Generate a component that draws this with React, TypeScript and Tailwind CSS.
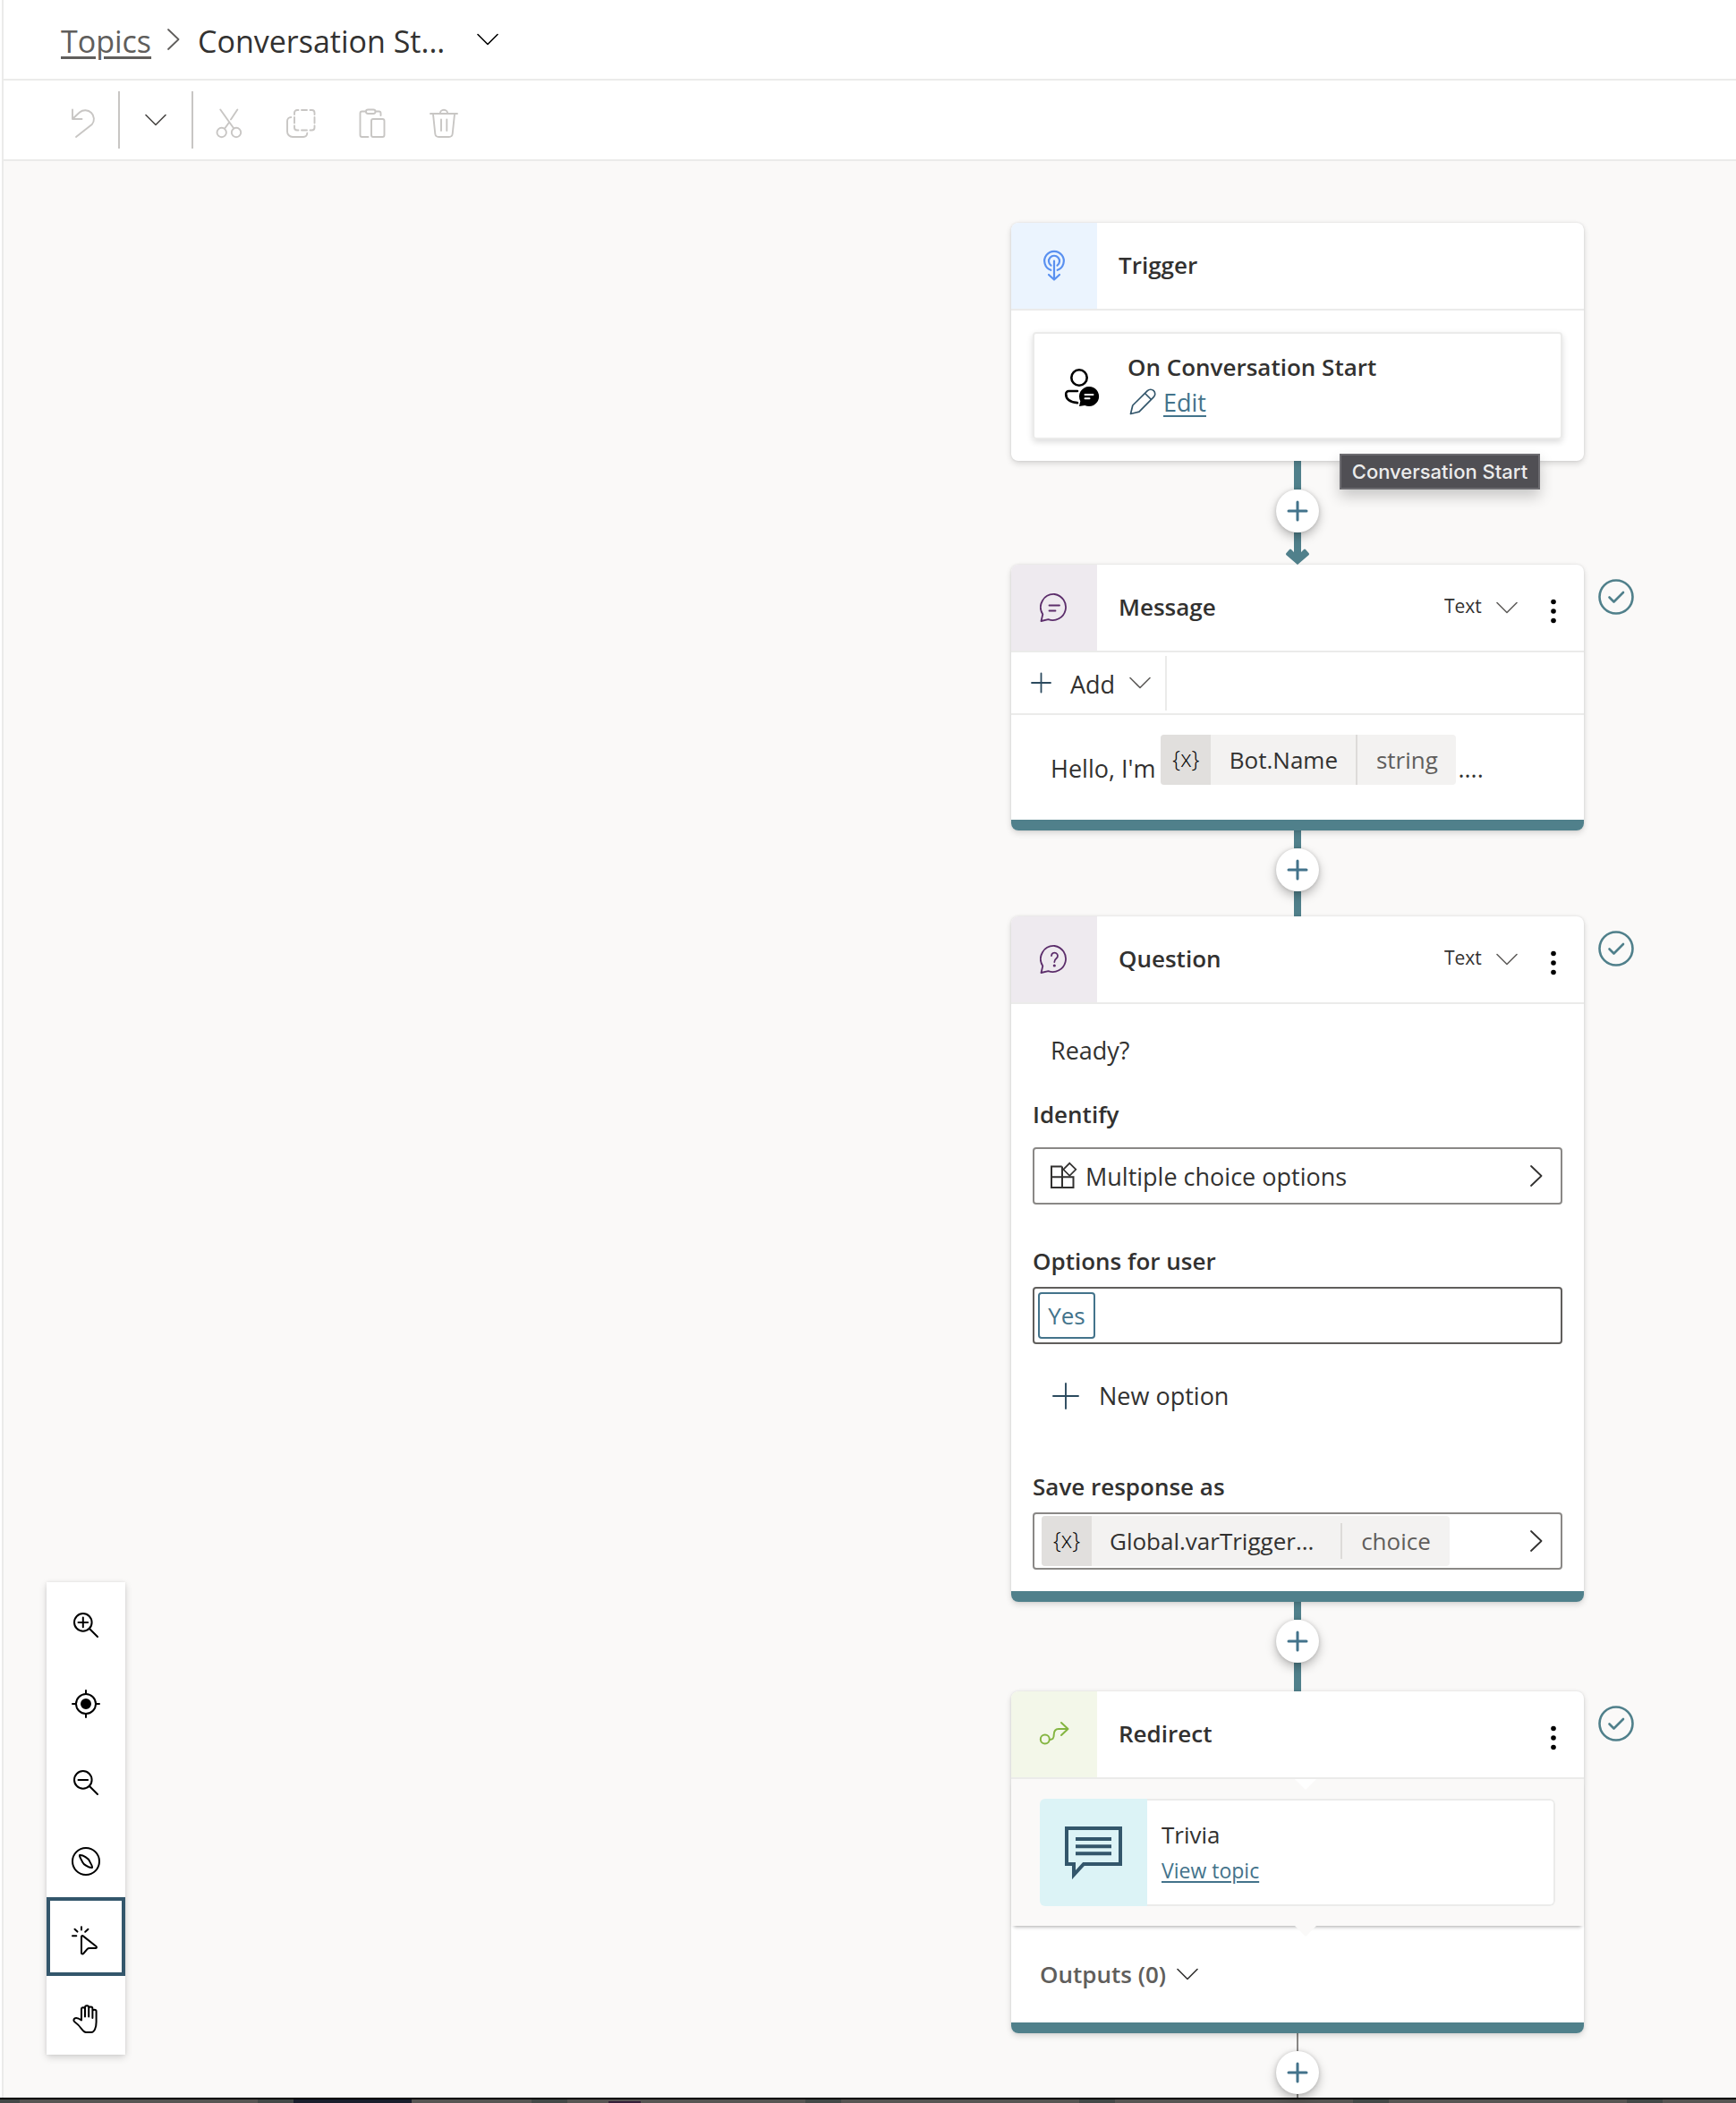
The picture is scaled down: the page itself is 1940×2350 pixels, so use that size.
import type { ReactNode } from "react";

type IconProps = { className?: string };

const line = {
  fill: "none",
  stroke: "currentColor",
  strokeLinecap: "round" as const,
  strokeLinejoin: "round" as const,
  "aria-hidden": true,
};

function ChevronDown({ className = "" }: IconProps) {
  return (
    <svg className={`h-3.5 w-6 shrink-0 ${className}`} viewBox="0 0 24 14" {...line} strokeWidth="1.6">
      <path d="M1 1.5l11 11 11-11" />
    </svg>
  );
}

function ChevronRight({ className = "" }: IconProps) {
  return (
    <svg className={`h-6 w-3.5 shrink-0 ${className}`} viewBox="0 0 14 24" {...line} strokeWidth="1.8">
      <path d="M1 1l11.500 11L1 23" />
    </svg>
  );
}

/* ---------- command bar icons ---------- */

function BarIcon({ children }: { children: ReactNode }) {
  return (
    <svg className="h-10 w-8 overflow-visible" viewBox="0 -6 32 40" {...line} strokeWidth="1.9">
      {children}
    </svg>
  );
}

const UndoIcon = () => (
  <BarIcon>
    <path d="M1 2.500v10.500h10.500M1.500 12.500L9 5.500A9.700 9.700 0 0 1 22.800 19L5 33" />
  </BarIcon>
);
const CutIcon = () => (
  <BarIcon>
    <circle cx="7.700" cy="28" r="5.200" />
    <circle cx="24" cy="28" r="5.200" />
    <path d="M6.300 2.500l15 21M25.300 2.500l-7.300 11M15.500 17.500l-4.300 6" />
  </BarIcon>
);
const CopyIcon = () => (
  <BarIcon>
    <path d="M9 8V6a3 3 0 0 1 3-3h1.500M17 3h6M26.500 3h2a3 3 0 0 1 3 3v2M31.500 11v6.500M31.500 20.500v2a3 3 0 0 1-3 3h-2M23 25.500h-6M13.500 25.500H12a3 3 0 0 1-3-3v-2M9 17.500V11" />
    <path d="M5.300 11A4.300 4.300 0 0 0 1 15.300V27a6 6 0 0 0 6 6h12a4.500 4.500 0 0 0 4.300-4.200" />
  </BarIcon>
);
const PasteIcon = () => (
  <BarIcon>
    <rect x="9" y="2.500" width="10.500" height="4.500" rx="2.200" />
    <path d="M8.500 4.500h-4a2 2 0 0 0-2 2V31a2 2 0 0 0 2 2H11.500M19.800 4.500h3.700a2 2 0 0 1 2 2V9" />
    <rect x="15" y="13" width="14.500" height="20" rx="2" />
  </BarIcon>
);
const TrashIcon = () => (
  <BarIcon>
    <path d="M1 7h30M11.800 7a4.200 4.200 0 0 1 8.400 0M4 7.500l2.300 22a4 4 0 0 0 4 3.500h11.400a4 4 0 0 0 4-3.500l2.300-22M13 13.500v12.500M19.300 13.500v12.500" />
  </BarIcon>
);

/* ---------- canvas tool icons ---------- */

function ToolIcon({ children }: { children: ReactNode }) {
  return (
    <svg className="size-8 overflow-visible" viewBox="0 0 32 32" {...line} strokeWidth="2">
      {children}
    </svg>
  );
}

const tools: { label: string; active?: boolean; icon: ReactNode }[] = [
  {
    label: "Zoom in",
    icon: (
      <>
        <circle cx="12.800" cy="12.900" r="9.800" />
        <path d="M20 20l9 9M7.500 12.900h10.600M12.800 7.600v10.600" />
      </>
    ),
  },
  {
    label: "Center view",
    icon: (
      <>
        <circle cx="16" cy="16" r="11" />
        <circle cx="16" cy="16" r="5" fill="currentColor" />
        <path d="M16 1v4M16 27v4M1 16h4M27 16h4" />
      </>
    ),
  },
  {
    label: "Zoom out",
    icon: (
      <>
        <circle cx="12.800" cy="12.900" r="9.800" />
        <path d="M20 20l9 9M7.500 12.900h10.600" />
      </>
    ),
  },
  {
    label: "Minimap",
    icon: (
      <>
        <circle cx="16" cy="16" r="15" />
        <path d="M9 9c-.8 1.200 2 5 3.200 7.800 1 2.300 6.800 6.700 10.800 6.200.8-1.200-2-5-3.200-7.800C18.800 12.900 13 8.500 9 9z" />
      </>
    ),
  },
  {
    label: "Select mode",
    active: true,
    icon: (
      <path d="M11 1.200v3.300M3.500 3.800l3 2.800M18.500 3.800l-3.300 3M1 11.200h4.300M11 12.200v18c0 1.300 1.300 1.700 2.200.8l4.200-4.800c.7-.8 1.500-1.100 2.500-1.100h6.800c1.300 0 1.700-1.300.8-2.100L12.800 11.400c-.9-.7-1.800-.3-1.800.8z" />
    ),
  },
  {
    label: "Pan mode",
    icon: (
      <path d="M11 17.500V5.200c0-2.600 4-2.600 4 0V13.500M15 5V3.200c0-2.600 4.200-2.600 4.200 0V13.500M19.200 4.500c0-2.600 4.200-2.600 4.200 0V15M23.400 7.500c0-2.400 4.200-2.400 4.200 0V19.500c0 7-2.500 11.500-5.500 11.500h-6c-2 0-3-1-4.500-3.200-2.800-4-4.600-6-8-8.300-1.600-1-1.600-3 0-4.100 2.200-1.400 5 .4 7.400 2.100" />
    ),
  },
];

/* ---------- node icons ---------- */

const TriggerIcon = () => (
  <svg className="h-9 w-8" viewBox="0 0 32 36" {...line} strokeWidth="2.200">
    <path d="M12.300 22.800a10.800 10.800 0 1 1 7.400 0M12.500 17.600a6 6 0 1 1 7 0M16 12.500v20M10 28l6 5.500 6-5.500" />
  </svg>
);
const bubble = "M16.500 1A14.600 14.600 0 1 1 9.500 29.200L1.500 31l1.800-7.500A14.600 14.600 0 0 1 16.500 1z";
const MessageIcon = () => (
  <svg className="size-8" viewBox="0 0 32 32" {...line} strokeWidth="1.800">
    <path d={bubble} />
    <path d="M10.500 13.500h11.500M10.500 19.500h7" />
  </svg>
);
const QuestionIcon = () => (
  <svg className="size-8" viewBox="0 0 32 32" {...line} strokeWidth="1.800">
    <path d={bubble} />
    <path d="M13 12a3.500 3.500 0 1 1 5.700 2.800c-1.500 1.200-2.400 2-2.400 4.200" />
    <circle cx="16.300" cy="23" r="0.700" fill="currentColor" />
  </svg>
);
const RedirectIcon = () => (
  <svg className="size-8 overflow-visible" viewBox="0 0 32 32" {...line} strokeWidth="2">
    <circle cx="5.800" cy="21.500" r="5" />
    <path d="M11 22c3.800 0 4.700-1.600 4.700-5.200 0-4.400 1.500-6.800 5.300-6.800h10M24 3l7.500 7-7.500 7" />
  </svg>
);
const PersonChatIcon = () => (
  <svg className="h-12 w-11 shrink-0 text-black" viewBox="0 0 44 48" {...line} strokeWidth="2.600">
    <circle cx="18" cy="15" r="8.700" />
    <path d="M16 30H6.500A3.200 3.200 0 0 0 3.200 33.200c0 6 5.300 9.300 12.800 9.900" />
    <path d="M29 25a11 11 0 1 1-4.700 20.900L18 47l1.300-5.800A11 11 0 0 1 29 25z" fill="currentColor" stroke="none" />
    <path d="M24.500 34h9M24.500 38.200h5" stroke="white" strokeWidth="2" />
  </svg>
);
const PencilIcon = () => (
  <svg className="size-[30px] shrink-0 text-[#33566b]" viewBox="0 0 30 30" {...line} strokeWidth="1.700">
    <path d="M1.500 28.500L3.800 19 20.300 2.700a4.900 4.900 0 0 1 7 7L11 26.200zM17.500 5.500l7 7" />
  </svg>
);
const OptionsIcon = () => (
  <svg className="size-8 shrink-0" viewBox="0 0 32 32" fill="none" stroke="currentColor" strokeWidth="2" aria-hidden>
    <path d="M13.700 5.500H2V29h24.500V17.200H2M14 5.500V29" />
    <path d="M22.300 1.800l7 7-7 7-7-7z" strokeWidth="1.700" />
  </svg>
);
const TopicIcon = () => (
  <svg className="h-[60px] w-16 text-[#33566b]" viewBox="0 0 64 60" fill="none" stroke="currentColor" strokeWidth="4" aria-hidden>
    <path d="M2 3h60v40H21L10 55V43H2z" />
    <path d="M12 15h40M12 23.300h40M12 31.300h40" />
  </svg>
);

function StatusCheck() {
  return (
    <svg className="absolute top-4 left-full ml-4 size-10 text-[#50808b]" viewBox="0 0 40 40" {...line} role="img" aria-label="No errors">
      <circle cx="20" cy="20" r="18.500" strokeWidth="2.600" />
      <path d="M12.500 20.500l5 5 10.500-10.500" strokeWidth="2.600" />
    </svg>
  );
}

/* ---------- building blocks ---------- */

function Node({ children, bar = true, status = true }: { children: ReactNode; bar?: boolean; status?: boolean }) {
  return (
    <article className="relative w-[640px] rounded-lg bg-white shadow-[0_3px_7px_rgba(0,0,0,0.14),0_0_3px_rgba(0,0,0,0.1)]">
      {children}
      {bar && <div className="h-3 rounded-b-lg bg-[#50808b]" />}
      {status && <StatusCheck />}
    </article>
  );
}

function NodeHeader({ icon, tile, title, kind, menu = true }: { icon: ReactNode; tile: string; title: string; kind?: string; menu?: boolean }) {
  return (
    <header className="flex h-[98px] items-center border-b-2 border-[#ebebea]">
      <div className={`flex h-full w-24 items-center justify-center rounded-tl-lg ${tile}`}>{icon}</div>
      <h2 className="flex-1 pb-0.5 pl-6 text-[26px] font-semibold">{title}</h2>
      {kind && (
        <div className="flex items-center">
          <select aria-label={`${title} type`} className="w-[82px] appearance-none bg-transparent pb-0.5 text-[21px] outline-none">
            <option>{kind}</option>
          </select>
          <ChevronDown className="pointer-events-none -ml-6 text-[#605e5c]" />
        </div>
      )}
      {menu && (
        <button type="button" aria-label={`${title} options`} className="mr-[22px] ml-7 flex w-6 justify-center pt-2">
          <svg className="h-7 w-2" viewBox="0 0 8 28" fill="black" aria-hidden>
            <circle cx="4" cy="3.500" r="2.800" />
            <circle cx="4" cy="14" r="2.800" />
            <circle cx="4" cy="24.500" r="2.800" />
          </svg>
        </button>
      )}
    </header>
  );
}

function AddNodeButton() {
  return (
    <button
      type="button"
      aria-label="Add node"
      className="relative z-10 flex size-12 shrink-0 items-center justify-center rounded-full bg-white text-[#43738b] shadow-[0_5px_12px_rgba(0,0,0,0.26),0_0_4px_rgba(0,0,0,0.14)]"
    >
      <svg className="size-6" viewBox="0 0 24 24" {...line} strokeWidth="3">
        <path d="M2 12h20M12 2v20" />
      </svg>
    </button>
  );
}

function Connector({ before, after }: { before: string; after: string }) {
  return (
    <div className="flex w-[640px] flex-col items-center">
      <div className={`w-2 bg-[#50808b] ${before}`} />
      <AddNodeButton />
      <div className={`w-2 bg-[#50808b] ${after}`} />
    </div>
  );
}

function VariableMark() {
  return <span className="h-14 w-14 bg-[#e1dfdd] text-center text-[25px] leading-[53px] font-light text-black">{"{x}"}</span>;
}

const label = "text-[26px] leading-9 font-semibold";
const field = "flex h-16 w-full items-center rounded border-2";

export default function App() {
  return (
    <div className="flex min-h-screen flex-col bg-white font-['Open_Sans','Noto_Sans',sans-serif] text-[#323130]">
      <div className="ml-0.5 flex flex-1 flex-col border-l-2 border-[#ebebea]">
        <nav aria-label="Breadcrumb" className="flex h-[90px] items-center border-b-2 border-[#ebebea] px-16 text-[34px]">
          <a href="#topics" className="pt-1 text-[#605e5c] underline decoration-3 underline-offset-4">
            Topics
          </a>
          <ChevronRight className="ml-[18px] text-[#605e5c]" />
          <h1 className="ml-5 pt-1">Conversation St...</h1>
          <button type="button" aria-label="Switch topic" className="ml-9">
            <ChevronDown className="text-black" />
          </button>
        </nav>

        <div role="toolbar" aria-label="Edit" className="flex h-[90px] items-center border-b-2 border-[#ebebea] pl-[76px] text-[#c8c6c4]">
          <button type="button" aria-label="Undo" className="mr-5">
            <UndoIcon />
          </button>
          <div className="h-16 w-0.5 bg-[#c8c6c4]" />
          <button type="button" aria-label="Undo history" className="flex w-20 justify-center text-[#484644]">
            <ChevronDown />
          </button>
          <div className="h-16 w-0.5 bg-[#c8c6c4]" />
          <button type="button" aria-label="Cut" className="flex w-20 justify-center">
            <CutIcon />
          </button>
          <button type="button" aria-label="Copy" className="flex w-20 justify-center">
            <CopyIcon />
          </button>
          <button type="button" aria-label="Paste" className="flex w-20 justify-center">
            <PasteIcon />
          </button>
          <button type="button" aria-label="Delete" className="flex w-20 justify-center">
            <TrashIcon />
          </button>
        </div>

        <main className="relative flex flex-1 flex-col items-end bg-[#faf9f8] pt-[69px] pr-[170px]">
          <div role="toolbar" aria-label="Canvas tools" className="absolute bottom-12 left-12 flex w-[88px] flex-col bg-white text-black shadow-[0_3px_8px_rgba(0,0,0,0.16),0_0_3px_rgba(0,0,0,0.08)]">
            {tools.map((t) => (
              <button
                key={t.label}
                type="button"
                aria-label={t.label}
                aria-pressed={t.active ?? false}
                className={`flex h-[88px] items-center justify-center border-4 pt-2 ${t.active ? "border-[#33566b]" : "border-transparent"}`}
              >
                <ToolIcon>{t.icon}</ToolIcon>
              </button>
            ))}
          </div>

          <Node bar={false} status={false}>
            <NodeHeader icon={<TriggerIcon />} tile="bg-[#ebf4fe] text-[#5990f0]" title="Trigger" menu={false} />
            <div className="p-6">
              <div className="flex h-[120px] items-center gap-[26px] rounded border-2 border-[#ebebea] pl-8 shadow-[0_3px_7px_rgba(0,0,0,0.14)]">
                <PersonChatIcon />
                <div className="pl-0.5">
                  <h3 className={label}>On Conversation Start</h3>
                  <a href="#edit" className="ml-0.5 flex items-center gap-2 text-[27px] leading-10 text-[#43738b]">
                    <PencilIcon />
                    <span className="pt-0.5 underline decoration-2 underline-offset-4">Edit</span>
                  </a>
                </div>
              </div>
            </div>
            <div role="tooltip" className="absolute top-[258px] left-[367px] z-20 flex h-10 w-56 items-center justify-center border-2 border-[#6c6b70] bg-[#504f54] font-['Inter'] text-[22px] font-medium whitespace-nowrap text-[#ececec] shadow-[0_8px_16px_rgba(0,0,0,0.2)]">
              Conversation Start
            </div>
          </Node>

          <div className="flex w-[640px] flex-col items-center">
            <div className="h-8 w-2 bg-[#50808b]" />
            <AddNodeButton />
            <svg className="h-9 w-[26px] text-[#50808b]" viewBox="0 0 26 36" fill="currentColor" aria-hidden>
              <path d="M9 0h8v22l3-3q1-1 2 0l3.500 4q1 1.200 0 2.300L13 36 .5 25.300q-1-1.100 0-2.300L4 19q1-1 2 0l3 3z" />
            </svg>
          </div>

          <Node>
            <NodeHeader icon={<MessageIcon />} tile="bg-[#eeeaef] text-[#5c2e6b]" title="Message" kind="Text" />
            <div className="flex h-[70px] items-center border-b-2 border-[#ebebea] pl-[22px]">
              <button type="button" className="flex items-center text-[27px]">
                <svg className="size-6 text-[#2b4a5e]" viewBox="0 0 24 24" {...line} strokeWidth="1.800">
                  <path d="M1 12h21M11.500 1.500v21" />
                </svg>
                <span className="mt-1 ml-5">Add</span>
                <ChevronDown className="ml-4 text-[#605e5c]" />
              </button>
              <div className="ml-4 h-[61px] w-0.5 bg-[#ebebea]" />
            </div>
            <div className="flex h-[117px] items-start pt-[22px] pl-11 text-[27px] leading-[56px]">
              <span className="pt-2.5">Hello, I'm</span>
              <span className="ml-1.5 flex h-14 overflow-hidden rounded bg-[#f3f2f1] text-[26px]">
                <VariableMark />
                <span className="w-[162px] text-center">Bot.Name</span>
                <span className="w-28 border-l-2 border-[#dddbd9] text-center text-[#605e5c]">string</span>
              </span>
              <span className="ml-0.5 pt-2.5">....</span>
            </div>
          </Node>

          <Connector before="h-5" after="h-7" />

          <Node>
            <NodeHeader icon={<QuestionIcon />} tile="bg-[#eeeaef] text-[#5c2e6b]" title="Question" kind="Text" />
            <div className="flex flex-col px-6 pt-8 pb-6 text-[27px] leading-10">
              <p className="pl-5">Ready?</p>

              <h3 id="identify" className={`mt-[33px] ${label}`}>
                Identify
              </h3>
              <button type="button" aria-describedby="identify" className={`mt-[19px] gap-2 border-[#8a8886] pr-5 pl-[17px] ${field}`}>
                <OptionsIcon />
                <span className="flex-1 pt-0.5 text-left">Multiple choice options</span>
                <ChevronRight />
              </button>

              <label htmlFor="options" className={`mt-[45px] ${label}`}>
                Options for user
              </label>
              <div className={`mt-[11px] border-[#605e5c] px-1 ${field}`}>
                <button type="button" className="flex h-[52px] w-16 items-center justify-center rounded border-2 border-[#43738b] text-[26px] text-[#43738b]">
                  Yes
                </button>
                <input id="options" type="text" className="h-full min-w-0 flex-1 bg-transparent px-2 outline-none" />
              </div>

              <button type="button" className="mt-[38px] flex items-center gap-[22px] pl-[22px]">
                <svg className="size-[30px] text-[#2b4a5e]" viewBox="0 0 30 30" {...line} strokeWidth="1.900">
                  <path d="M1 15h28M15 1v28" />
                </svg>
                New option
              </button>

              <h3 id="save" className={`mt-[63px] ${label}`}>
                Save response as
              </h3>
              <button type="button" aria-describedby="save" className={`mt-[11px] justify-between border-[#8a8886] pr-5 pl-2 ${field}`}>
                <span className="flex h-14 items-center overflow-hidden rounded bg-[#f3f2f1] text-[26px]">
                  <VariableMark />
                  <span className="w-[278px] pl-5 text-left">Global.varTrigger...</span>
                  <span className="h-10 w-[122px] border-l-2 border-[#dddbd9] text-center text-[#605e5c]">choice</span>
                </span>
                <ChevronRight />
              </button>
            </div>
          </Node>

          <Connector before="h-5" after="h-8" />

          <Node>
            <NodeHeader icon={<RedirectIcon />} tile="bg-[#f3f7e9] text-[#84b541]" title="Redirect" />
            <div className="relative bg-[#faf9f8] px-8 py-[22px] shadow-[0_4px_4px_-3px_rgba(0,0,0,0.35)]">
              <div className="absolute top-0 left-[317px] h-3 w-6 bg-white [clip-path:polygon(0_0,100%_0,50%_100%)]" />
              <div className="absolute top-full left-[317px] h-3 w-6 bg-[#faf9f8] [clip-path:polygon(0_0,100%_0,50%_100%)]" />
              <div className="flex h-[120px] overflow-hidden rounded-md">
                <div className="flex w-[120px] items-center justify-center bg-[#dcf3f6]">
                  <TopicIcon />
                </div>
                <div className="flex flex-1 flex-col items-start justify-center gap-1 rounded-r-md border-2 border-l-0 border-[#ebebea] bg-white pl-4 leading-9">
                  <h3 className="text-[26px]">Trivia</h3>
                  <a href="#trivia" className="text-[23px] text-[#43738b] underline decoration-2 underline-offset-3">
                    View topic
                  </a>
                </div>
              </div>
            </div>
            <button type="button" className="flex h-[108px] items-center gap-3 pl-8 text-[26px] font-semibold text-[#605e5c]">
              Outputs (0)
              <ChevronDown className="text-[#323130]" />
            </button>
          </Node>

          <div className="flex w-[640px] flex-col items-center">
            <div className="h-5 w-0.5 bg-[#8a8886]" />
            <AddNodeButton />
            <div className="h-1 w-0.5 bg-[#8a8886]" />
          </div>
        </main>
      </div>

      <footer className="flex h-1.5 overflow-hidden border-t-2 border-black bg-[#575553]">
        <div className="w-[22px] shrink-0 bg-[#434847]" />
        <div className="ml-[266px] w-10 shrink-0 bg-[#434847]" />
        <div className="w-[132px] shrink-0 bg-[#1a1e2c]" />
        <div className="ml-[134px] w-10 shrink-0 bg-[#434847]" />
        <div className="mt-0.5 ml-[46px] w-9 shrink-0 bg-[#35203a]" />
        <div className="ml-[184px] w-10 shrink-0 bg-[#434847]" />
        <div className="ml-[266px] w-10 shrink-0 bg-[#434847]" />
        <div className="ml-[266px] w-10 shrink-0 bg-[#434847]" />
        <div className="ml-[266px] w-10 shrink-0 bg-[#434847]" />
      </footer>
    </div>
  );
}
